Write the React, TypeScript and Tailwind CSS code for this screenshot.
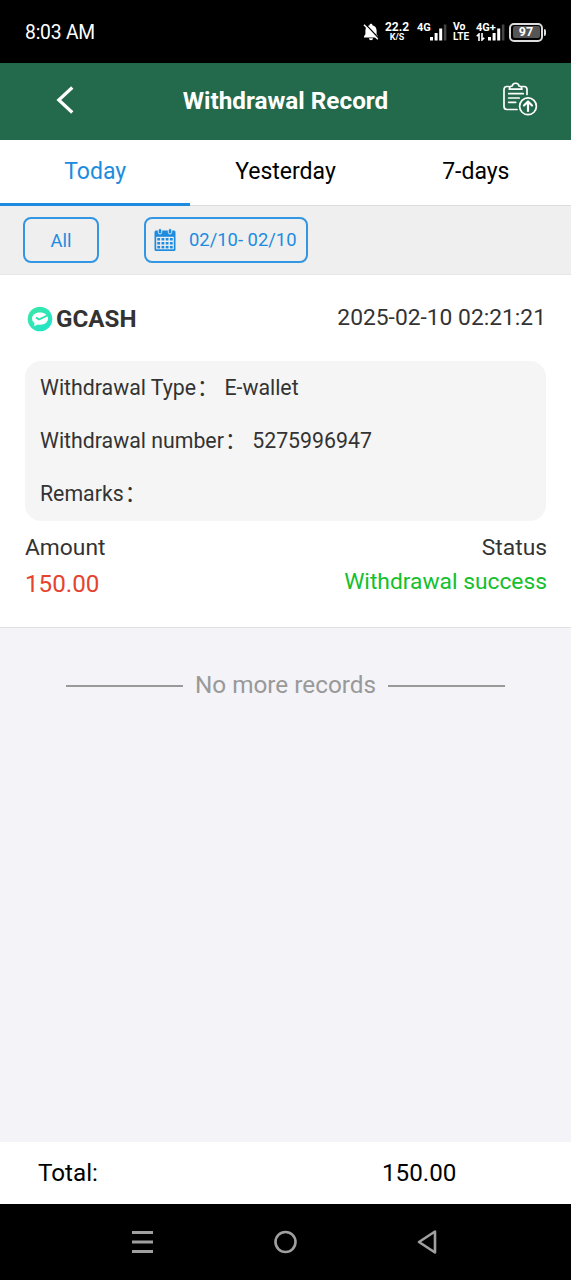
import React, { useState } from 'react';

const tabs = ['Today', 'Yesterday', '7-days'];

const details = [
    { label: 'Withdrawal Type', value: 'E-wallet' },
    { label: 'Withdrawal number', value: '5275996947' },
    { label: 'Remarks', value: '' },
];

const BellOffIcon = () => (
    <svg className="w-4 h-[18px]" viewBox="0 0 16 18" fill="none">
        <path d="M8 .8c.9 0 1.400.6 1.400 1.400C12 2.800 13.600 4.800 13.600 7.500v3.800l1.400 2v1.200H1v-1.200l1.400-2V7.500c0-2.700 1.600-4.700 4.200-5.300C6.600 1.400 7.100.8 8 .8z" fill="#fff" />
        <path d="M6 15.200h4c0 1.200-.8 2-2 2s-2-.8-2-2z" fill="#fff" />
        <path d="M2.200 1 15.800 15.200" stroke="#000" strokeWidth="1.300" />
        <path d="M1 1.800 14.800 16.200" stroke="#fff" strokeWidth="1.500" />
    </svg>
);

const SignalBars = ({ className }: { className?: string }) => (
    <svg className={className} viewBox="0 0 17 17">
        <rect x="0" y="13" width="3" height="3.500" fill="#fff" />
        <rect x="4.600" y="9" width="3" height="7.500" fill="#fff" />
        <rect x="9.200" y="4.500" width="3" height="12" fill="#fff" />
        <rect x="13.800" y="0.500" width="2.600" height="16" fill="#444" />
    </svg>
);

const StatusBar = () => (
    <div className="h-[63px] shrink-0 bg-black text-white flex items-center justify-between pt-px pl-[25px] pr-[25px]">
        <span className="text-[19.300px] tracking-[-0.200px] pt-[2px]">8:03 AM</span>
        <div className="flex items-center h-6">
            <BellOffIcon />
            <div className="ml-[6px] w-[24px] flex flex-col items-center font-bold">
                <span className="text-[12px] leading-[11px]">22.2</span>
                <span className="text-[9px] leading-[9px]">K/S</span>
            </div>
            <div className="relative ml-[8px] w-[29px] h-5">
                <span className="absolute left-0 top-0 text-[11px] leading-[12px] font-bold">4G</span>
                <SignalBars className="absolute left-[13px] top-[2px] w-[17px] h-[17px]" />
            </div>
            <div className="ml-[7px] w-[17px] flex flex-col font-bold text-[10.500px] leading-[10px]">
                <span>Vo</span>
                <span className="text-[10px]">LTE</span>
            </div>
            <div className="relative ml-[6px] w-[28px] h-5">
                <SignalBars className="absolute left-[12px] top-[2px] w-[17px] h-[17px]" />
                <span className="absolute left-0 top-0 text-[11px] leading-[12px] font-bold">4G+</span>
                <svg className="absolute left-0 top-[11px] w-[9px] h-2" viewBox="0 0 9 8" fill="none" stroke="#fff" strokeWidth="1.600">
                    <path d="M3 8V1L.8 3.200M6 0v7l2.200-2.200" />
                </svg>
            </div>
            <div className="ml-[5px] flex items-center">
                <div className="w-[34px] h-[19px] rounded-[5px] border-2 border-[#ddd] p-[1.500px]">
                    <div className="w-full h-full rounded-[2px] bg-[#555] flex items-center justify-center text-[12.500px] leading-none font-bold">97</div>
                </div>
                <div className="ml-px w-[2px] h-[7px] rounded-r bg-[#ddd]" />
            </div>
        </div>
    </div>
);

const ClipboardIcon = () => (
    <svg className="w-9 h-9" viewBox="0 0 36 36" fill="none" stroke="#fff" strokeWidth="1.700" strokeLinecap="round" strokeLinejoin="round">
        <path d="M7 4.500H5C3 4.500 2 5.500 2 7.500v17c0 2 1 3 3 3h10M20 4.500h2c2 0 3 1 3 3v5" />
        <path d="M10.300 4C10.500.3 16.700.3 16.900 4c2 0 3 1 3 3.200H7.300C7.300 5 8.300 4 10.300 4z" />
        <path d="M6.700 11.700h14.500M6.700 16h10.500M6.700 20.300h7" />
        <circle cx="26" cy="24.300" r="8.400" />
        <path d="M26 29v-9M22 23.500l4-4 4 4" strokeWidth="2.200" />
    </svg>
);

const CalendarIcon = () => (
    <svg className="w-[22px] h-6" viewBox="0 0 22 24">
        <path d="M2 2.500h18A1.500 1.500 0 0 1 21.500 4v17.500A1.500 1.500 0 0 1 20 23H2a1.500 1.500 0 0 1-1.500-1.500V4A1.500 1.500 0 0 1 2 2.500z" fill="#1d8ce0" />
        <path d="M2.200 8.800h17.600v12.500H2.200z" fill="#efefef" />
        {[5, 15].map((x) => (
            <rect key={x} x={x - 0.7} y="0.500" width="3.400" height="5.500" rx="1.700" fill="#1d8ce0" stroke="#efefef" strokeWidth="0.900" />
        ))}
        {[10, 14, 17.9].map((y) =>
            [3.3, 7.5, 11.7, 15.9].map((x) => (
                <rect key={`${x}-${y}`} x={x} y={y} width="2.800" height="2.500" fill="#1d8ce0" />
            ))
        )}
    </svg>
);

const GCashLogo = () => (
    <svg className="w-[26px] h-[26px]" viewBox="0 0 26 26">
        <defs>
            <linearGradient id="mint" x1="0" y1="0" x2="1" y2="1">
                <stop offset="0" stopColor="#3be8a4" />
                <stop offset="1" stopColor="#20e3cb" />
            </linearGradient>
        </defs>
        <circle cx="13" cy="13" r="12.300" fill="url(#mint)" />
        <path d="M13 6.500c4.800 0 8 2.500 8 6.100s-3.200 6.200-8 6.200c-.8 0-1.600 0-2.300-.2L7.200 20.300l.3-3.200c-1.700-1.100-2.500-2.600-2.500-4.500 0-3.600 3.200-6.100 8-6.100z" fill="#fff" />
        <path d="m9 11.500 3 2 8.300-4" fill="none" stroke="#25dfae" strokeWidth="1.900" />
    </svg>
);

export default function App() {
    const [active, setActive] = useState('Today');

    return (
        <div className="w-[571px] h-[1280px] flex flex-col overflow-hidden bg-[#f3f3f8] text-[#333] font-[Roboto,'Noto_Sans_CJK_SC',sans-serif]">
            <StatusBar />

            <header className="h-[77px] shrink-0 bg-[#23694b] text-white grid grid-cols-[1fr_auto_1fr] items-center pl-[55px] pr-[33px] pb-[3px]">
                <svg className="w-5 h-[30px]" viewBox="0 0 20 30" fill="none" stroke="#fff" strokeWidth="3.200">
                    <path d="M17.300 2.500 3.800 15l13.500 12.500" />
                </svg>
                <h1 className="text-[24.300px] font-bold -ml-[22px] pt-[2px]">Withdrawal Record</h1>
                <div className="flex justify-end">
                    <ClipboardIcon />
                </div>
            </header>

            <nav className="h-[66px] shrink-0 grid grid-cols-3 bg-white border-b border-[#dcdcdc]">
                {tabs.map((tab) => (
                    <button
                        key={tab}
                        onClick={() => setActive(tab)}
                        className={`relative z-10 h-[66px] pt-[2px] text-[23px] border-b-[3px] ${
                            active === tab ? 'border-[#1d8ce0] text-[#1d8ce0]' : 'border-transparent text-black'
                        }`}
                    >
                        {tab}
                    </button>
                ))}
            </nav>

            <div className="h-[69px] shrink-0 flex items-center bg-[#efefef] border-b border-[#e6e6e6] pl-[23px] gap-[45px] text-[#1d8ce0] text-[18.400px]">
                <button className="w-[76px] h-[46px] rounded-lg border-2 border-[#1d8ce0]/90 pt-[2px]">All</button>
                <button className="w-[164px] h-[46px] rounded-lg border-2 border-[#1d8ce0]/90 flex items-center pl-[8px] gap-[13px] whitespace-nowrap">
                    <CalendarIcon />
                    <span className="-mt-px">02/10- 02/10</span>
                </button>
            </div>

            <section className="h-[353px] shrink-0 bg-white border-b border-[#e0e0e2] px-[25px]">
                <div className="h-[86px] flex items-center justify-between pl-[2px]">
                    <div className="flex items-center gap-[3px] pt-[2px]">
                        <GCashLogo />
                        <span className="text-[24.200px] font-bold">GCASH</span>
                    </div>
                    <span className="text-[22.800px]">2025-02-10 02:21:21</span>
                </div>
                <div className="h-[160px] rounded-2xl bg-[#f5f5f5] px-[15px] text-[21.300px]">
                    {details.map((d) => (
                        <div key={d.label} className="h-[53px] flex items-center">
                            <span>{d.label}</span>
                            <span className="ml-px">：</span>
                            <span className="ml-[6px]">{d.value}</span>
                        </div>
                    ))}
                </div>
                <div className="flex justify-between pt-[10px] text-[22.800px] leading-[34px] -mr-px">
                    <div className="flex flex-col">
                        <span>Amount</span>
                        <span className="text-[24.200px] leading-[38px] text-[#e5432d]">150.00</span>
                    </div>
                    <div className="flex flex-col text-right">
                        <span>Status</span>
                        <span className="text-[#14c02c]">Withdrawal success</span>
                    </div>
                </div>
            </section>

            <main className="flex-1">
                <div className="mt-[38px] h-10 flex items-center justify-center gap-3 text-[24.300px] text-[#999]">
                    <div className="w-[117px] h-[2px] bg-[#999]" />
                    <span className="-mt-[2px]">No more records</span>
                    <div className="w-[117px] h-[2px] bg-[#999]" />
                </div>
            </main>

            <footer className="h-[62px] shrink-0 bg-white text-black text-[24.200px] flex items-center pl-[38px]">
                <span className="w-[344px]">Total:</span>
                <span>150.00</span>
            </footer>

            <div className="h-[76px] shrink-0 bg-black flex items-center">
                <svg className="ml-[132px] w-[22px] h-6" viewBox="0 0 22 24" fill="#a0a0a0">
                    <path d="M0 1h21v3H0zM0 10.500h21v3H0zM0 20h21v3H0z" />
                </svg>
                <svg className="ml-[119px] w-6 h-6" viewBox="0 0 24 24" fill="none" stroke="#a0a0a0" strokeWidth="2.600">
                    <circle cx="12.500" cy="12" r="10" />
                </svg>
                <svg className="ml-[120px] w-5 h-6" viewBox="0 0 20 24" fill="none" stroke="#a0a0a0" strokeWidth="2.600" strokeLinejoin="round">
                    <path d="M18 1.500v21L2 12z" />
                </svg>
            </div>
        </div>
    );
}
